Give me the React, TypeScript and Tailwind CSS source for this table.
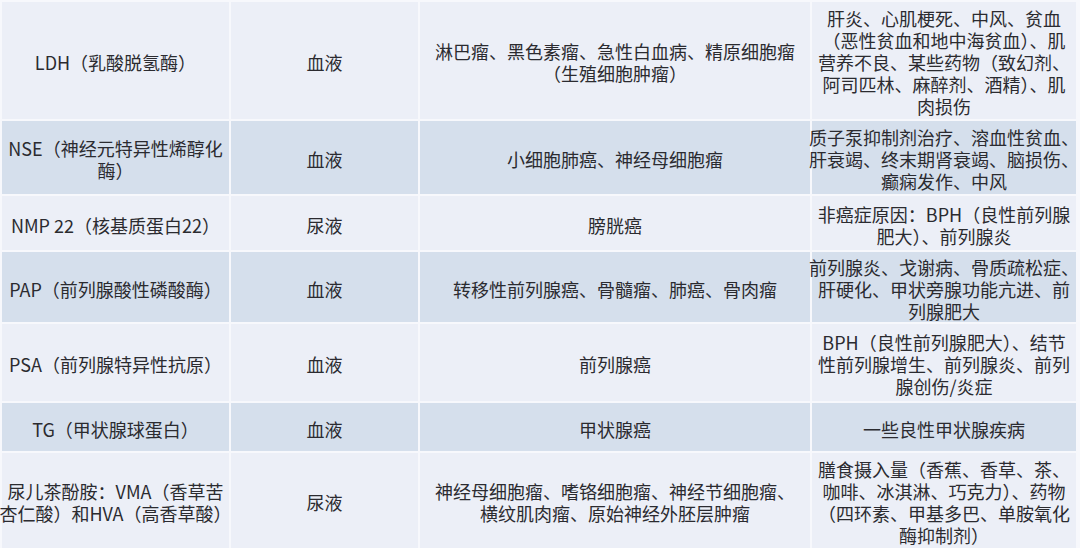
import { Fragment } from 'react'

type Row = {
  h: string
  bg: string
  cells: string[][]
}

// 肿瘤标志物对照表
const rows: Row[] = [
  {
    h: 'h-[117px]',
    bg: 'bg-[#eceff7]',
    cells: [
      ['LDH（乳酸脱氢酶）'],
      ['血液'],
      ['淋巴瘤、黑色素瘤、急性白血病、精原细胞瘤', '（生殖细胞肿瘤）'],
      ['肝炎、心肌梗死、中风、贫血', '（恶性贫血和地中海贫血）、肌', '营养不良、某些药物（致幻剂、', '阿司匹林、麻醉剂、酒精）、肌', '肉损伤'],
    ],
  },
  {
    h: 'h-[73px]',
    bg: 'bg-[#d5dfec]',
    cells: [
      ['NSE（神经元特异性烯醇化', '酶）'],
      ['血液'],
      ['小细胞肺癌、神经母细胞瘤'],
      ['质子泵抑制剂治疗、溶血性贫血、', '肝衰竭、终末期肾衰竭、脑损伤、', '癫痫发作、中风'],
    ],
  },
  {
    h: 'h-[54px]',
    bg: 'bg-[#eceff7]',
    cells: [
      ['NMP 22（核基质蛋白22）'],
      ['尿液'],
      ['膀胱癌'],
      ['非癌症原因：BPH（良性前列腺', '肥大）、前列腺炎'],
    ],
  },
  {
    h: 'h-[70px]',
    bg: 'bg-[#d5dfec]',
    cells: [
      ['PAP（前列腺酸性磷酸酶）'],
      ['血液'],
      ['转移性前列腺癌、骨髓瘤、肺癌、骨肉瘤'],
      ['前列腺炎、戈谢病、骨质疏松症、', '肝硬化、甲状旁腺功能亢进、前', '列腺肥大'],
    ],
  },
  {
    h: 'h-[77px]',
    bg: 'bg-[#eceff7]',
    cells: [
      ['PSA（前列腺特异性抗原）'],
      ['血液'],
      ['前列腺癌'],
      ['BPH（良性前列腺肥大）、结节', '性前列腺增生、前列腺炎、前列', '腺创伤/炎症'],
    ],
  },
  {
    h: 'h-[48px]',
    bg: 'bg-[#d5dfec]',
    cells: [
      ['TG（甲状腺球蛋白）'],
      ['血液'],
      ['甲状腺癌'],
      ['一些良性甲状腺疾病'],
    ],
  },
  {
    h: 'h-[95px]',
    bg: 'bg-[#eceff7]',
    cells: [
      ['尿儿茶酚胺：VMA（香草苦', '杏仁酸）和HVA（高香草酸）'],
      ['尿液'],
      ['神经母细胞瘤、嗜铬细胞瘤、神经节细胞瘤、', '横纹肌肉瘤、原始神经外胚层肿瘤'],
      ['膳食摄入量（香蕉、香草、茶、', '咖啡、冰淇淋、巧克力）、药物', '（四环素、甲基多巴、单胺氧化', '酶抑制剂）'],
    ],
  },
]

export default function App() {
  return (
    <div className="h-[548px] w-[1080px] overflow-hidden bg-[#f7f8fc] pl-[2px] pt-[2px] font-['Noto_Sans_CJK_SC',sans-serif] text-[18px] leading-[22px] text-[#2b2b30]">
      <div className="grid w-[1076px] grid-cols-[227px_187px_390px_264px] gap-[2px]">
        {rows.map((row, i) =>
          row.cells.map((lines, j) => (
            <div
              key={`${i}-${j}`}
              className={`flex items-center justify-center pt-[3px] text-center ${row.h} ${row.bg}`}
            >
              <p className="whitespace-nowrap">
                {lines.map((line, k) => (
                  <Fragment key={k}>
                    {k > 0 && <br />}
                    {line}
                  </Fragment>
                ))}
              </p>
            </div>
          )),
        )}
      </div>
    </div>
  )
}
